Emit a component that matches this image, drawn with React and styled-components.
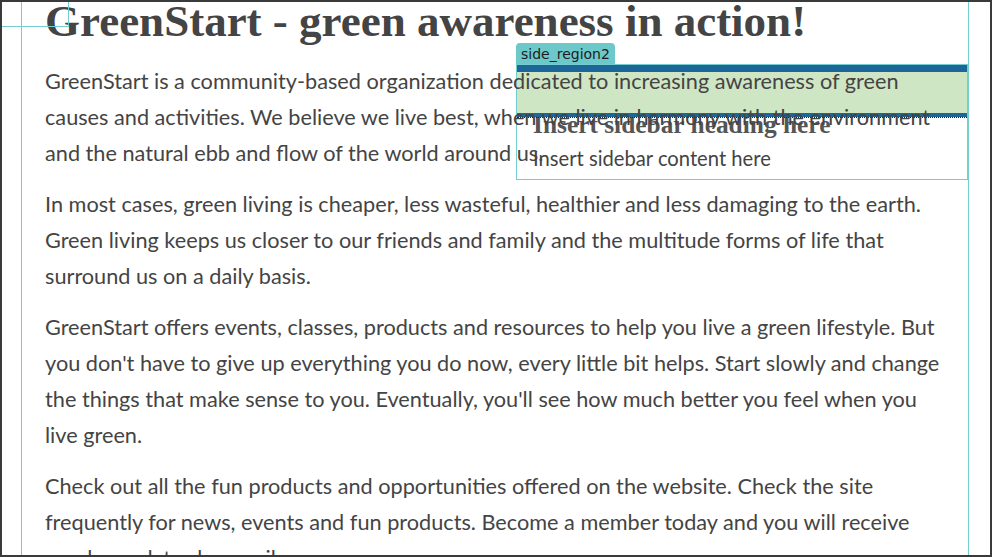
import React from "react";
import styled, { createGlobalStyle } from "styled-components";

const GlobalStyle = createGlobalStyle`
  html, body { margin: 0; padding: 0; background: #ffffff; }
  * { box-sizing: border-box; }
`;

const guide = "#74cdd0";

const Frame = styled.div`
  position: relative;
  width: 992px;
  height: 557px;
  border: 2px solid #3a3a3a;
  overflow: hidden;
  background: #ffffff;
`;

const CornerGuide = styled.div`
  position: absolute;
  left: 0;
  top: 0;
  width: 67px;
  height: 25px;
  border-right: 1px solid ${guide};
  border-bottom: 1px solid ${guide};
  z-index: 3;
  pointer-events: none;
`;

const Page = styled.div`
  position: relative;
  display: flow-root;
  margin-left: 19px;
  width: 948px;
  height: 100%;
  border-left: 1px solid ${guide};
  border-right: 1px solid ${guide};
`;

const Content = styled.main`
  position: relative;
  display: flow-root;
  z-index: 2;
  padding-left: 23px;
  color: #444444;
`;

const Title = styled.h1`
  margin: -3px 0 19px;
  font-family: "Liberation Serif", "Times New Roman", serif;
  font-weight: 700;
  font-size: 45px;
  line-height: 45px;
  color: #444444;
  white-space: nowrap;
`;

const Para = styled.p`
  margin: 0 0 15px;
  font-family: Lato, "Open Sans", sans-serif;
  font-size: 21.7px;
  line-height: 36px;
`;

const Line = styled.span`
  display: block;
  white-space: nowrap;
`;

const Sidebar = styled.aside`
  position: absolute;
  z-index: 1;
  left: 494px;
  top: 41px;
  width: 452px;
  display: flex;
  flex-direction: column;
  align-items: flex-start;
`;

const Tab = styled.div`
  height: 21px;
  padding: 0 5px;
  background: #6dc8ca;
  border-radius: 4px 4px 0 0;
  font-family: "DejaVu Sans", sans-serif;
  font-size: 14px;
  line-height: 22px;
  color: #1d1d1d;
  white-space: nowrap;
`;

const Box = styled.div`
  align-self: stretch;
  border: 1px solid ${guide};
  padding-bottom: 9px;
`;

const Header = styled.div`
  position: relative;
  height: 52px;
  background: #cfe6c4;
  border-top: 7px solid #1d6699;
  border-bottom: 4px solid #1d6699;
  &::after {
    content: "";
    position: absolute;
    left: 0;
    right: 0;
    bottom: -5px;
    border-bottom: 1px dotted #222;
  }
`;

const SideHeading = styled.h2`
  margin: -5px 0 0;
  padding-left: 16px;
  font-family: "Liberation Serif", "Times New Roman", serif;
  font-weight: 700;
  font-size: 25.4px;
  line-height: 25px;
  color: #555555;
  white-space: nowrap;
`;

const SideText = styled.p`
  margin: 9px 0 0;
  padding-left: 16px;
  font-family: Lato, "Open Sans", sans-serif;
  font-size: 20.2px;
  line-height: 24px;
  color: #444444;
  white-space: nowrap;
`;

const paragraphs = [
  [
    "GreenStart is a community-based organization dedicated to increasing awareness of green",
    "causes and activities. We believe we live best, when we live in harmony with the environment",
    "and the natural ebb and flow of the world around us.",
  ],
  [
    "In most cases, green living is cheaper, less wasteful, healthier and less damaging to the earth.",
    "Green living keeps us closer to our friends and family and the multitude forms of life that",
    "surround us on a daily basis.",
  ],
  [
    "GreenStart offers events, classes, products and resources to help you live a green lifestyle. But",
    "you don't have to give up everything you do now, every little bit helps. Start slowly and change",
    "the things that make sense to you. Eventually, you'll see how much better you feel when you",
    "live green.",
  ],
  [
    "Check out all the fun products and opportunities offered on the website. Check the site",
    "frequently for news, events and fun products. Become a member today and you will receive",
    "regular updates by email.",
  ],
];

export default function App() {
  return (
    <>
      <GlobalStyle />
      <Frame>
        <CornerGuide />
        <Page>
          <Content>
            <Title>GreenStart - green awareness in action!</Title>
            {paragraphs.map((lines, i) => (
              <Para key={i}>
                {lines.map((l, j) => (
                  <Line key={j}>{l}</Line>
                ))}
              </Para>
            ))}
          </Content>
          <Sidebar>
            <Tab>side_region2</Tab>
            <Box>
              <Header />
              <SideHeading>Insert sidebar heading here</SideHeading>
              <SideText>Insert sidebar content here</SideText>
            </Box>
          </Sidebar>
        </Page>
      </Frame>
    </>
  );
}
